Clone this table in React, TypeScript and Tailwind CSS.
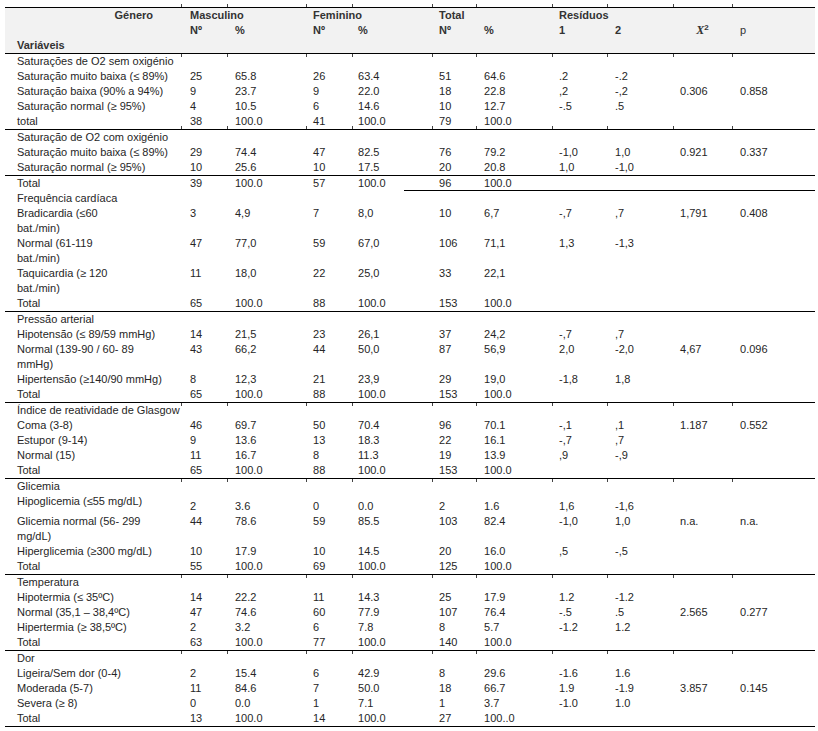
import React from "react";

type Row = {
  label?: React.ReactNode;
  v?: string;
  top?: "full";
  ticks?: "above" | "below";
  tall?: boolean;
  partialBottom?: boolean;
};

const colW = [
  "w-[176px]",
  "w-[46px]",
  "w-[79px]",
  "w-[46px]",
  "w-[80px]",
  "w-[44px]",
  "w-[76px]",
  "w-[55px]",
  "w-[66px]",
  "w-[59px]",
  "w-[83px]",
];

const padL = [
  "pl-[12px]",
  "pl-[9px]",
  "pl-[8px]",
  "pl-[7px]",
  "pl-[6px]",
  "pl-[7px]",
  "pl-[8px]",
  "pl-[7px]",
  "pl-[8px]",
  "pl-[7px]",
  "pl-[8px]",
];

const rows: Row[] = [
  { label: "Saturações de O2 sem oxigénio", top: "full", ticks: "below" },
  { label: "Saturação muito baixa (≤ 89%)", v: "25 65.8 26 63.4 51 64.6 .2 -.2" },
  { label: "Saturação baixa (90% a 94%)", v: "9 23.7 9 22.0 18 22.8 ,2 -,2 0.306 0.858" },
  { label: "Saturação normal (≥ 95%)", v: "4 10.5 6 14.6 10 12.7 -.5 .5" },
  { label: "total", v: "38 100.0 41 100.0 79 100.0" },

  { label: "Saturação de O2 com oxigénio", top: "full", ticks: "above" },
  { label: "Saturação muito baixa (≤ 89%)", v: "29 74.4 47 82.5 76 79.2 -1,0 1,0 0.921 0.337" },
  { label: "Saturação normal (≥ 95%)", v: "10 25.6 10 17.5 20 20.8 1,0 -1,0" },
  { label: "Total", v: "39 100.0 57 100.0 96 100.0", top: "full", partialBottom: true },

  { label: "Frequência cardíaca" },
  { label: <>Bradicardia (≤60<br />bat./min)</>, v: "3 4,9 7 8,0 10 6,7 -,7 ,7 1,791 0.408" },
  { label: <>Normal (61-119<br />bat./min)</>, v: "47 77,0 59 67,0 106 71,1 1,3 -1,3" },
  { label: <>Taquicardia (≥ 120<br />bat./min)</>, v: "11 18,0 22 25,0 33 22,1" },
  { label: "Total", v: "65 100.0 88 100.0 153 100.0" },

  { label: "Pressão arterial", top: "full" },
  { label: "Hipotensão (≤ 89/59 mmHg)", v: "14 21,5 23 26,1 37 24,2 -,7 ,7" },
  { label: <>Normal (139-90 / 60- 89<br />mmHg)</>, v: "43 66,2 44 50,0 87 56,9 2,0 -2,0 4,67 0.096" },
  { label: "Hipertensão (≥140/90 mmHg)", v: "8 12,3 21 23,9 29 19,0 -1,8 1,8" },
  { label: "Total", v: "65 100.0 88 100.0 153 100.0" },

  { label: "Índice de reatividade de Glasgow", top: "full", ticks: "below" },
  { label: "Coma (3-8)", v: "46 69.7 50 70.4 96 70.1 -,1 ,1 1.187 0.552" },
  { label: "Estupor (9-14)", v: "9 13.6 13 18.3 22 16.1 -,7 ,7" },
  { label: "Normal (15)", v: "11 16.7 8 11.3 19 13.9 ,9 -,9" },
  { label: "Total", v: "65 100.0 88 100.0 153 100.0" },

  { label: "Glicemia", top: "full", ticks: "below" },
  { label: "Hipoglicemia (≤55 mg/dL)", v: "2 3.6 0 0.0 2 1.6 1,6 -1,6", tall: true },
  { label: <>Glicemia normal (56- 299<br />mg/dL)</>, v: "44 78.6 59 85.5 103 82.4 -1,0 1,0 n.a. n.a." },
  { label: "Hiperglicemia (≥300 mg/dL)", v: "10 17.9 10 14.5 20 16.0 ,5 -,5" },
  { label: "Total", v: "55 100.0 69 100.0 125 100.0" },

  { label: "Temperatura", top: "full", ticks: "below" },
  { label: "Hipotermia (≤ 35ºC)", v: "14 22.2 11 14.3 25 17.9 1.2 -1.2" },
  { label: "Normal (35,1 – 38,4ºC)", v: "47 74.6 60 77.9 107 76.4 -.5 .5 2.565 0.277" },
  { label: "Hipertermia (≥ 38,5ºC)", v: "2 3.2 6 7.8 8 5.7 -1.2 1.2" },
  { label: "Total", v: "63 100.0 77 100.0 140 100.0" },

  { label: "Dor", top: "full", ticks: "below" },
  { label: "Ligeira/Sem dor (0-4)", v: "2 15.4 6 42.9 8 29.6 -1.6 1.6" },
  { label: "Moderada (5-7)", v: "11 84.6 7 50.0 18 66.7 1.9 -1.9 3.857 0.145" },
  { label: "Severa (≥ 8)", v: "0 0.0 1 7.1 1 3.7 -1.0 1.0" },
  { label: "Total", v: "13 100.0 14 100.0 27 100..0" },
];

// little border marks that Word leaves where the column edges meet a rule
const Tick = ({ side, left = "left-0" }: { side: "above" | "below"; left?: string }) => (
  <span
    className={`absolute ${left} w-px bg-[#444] ${
      side === "above" ? "top-[-4px] h-[3px]" : "top-0 h-[3px]"
    }`}
  />
);

export default function App() {
  return (
    <div className="min-h-screen bg-white pl-[5px] pt-[7px] font-['Liberation_Sans',Arial,sans-serif] text-[11px] text-[#262626]">
      <table className="w-[810px] table-fixed border-collapse border-b border-black">
        <colgroup>
          {colW.map((w, i) => (
            <col key={i} className={w} />
          ))}
        </colgroup>
        <thead className="bg-[#f2f2f2] font-bold text-[#333]">
          <tr className="h-[15px] leading-[15px]">
            <td className="border-t border-black pr-[28px] text-right">Género</td>
            <td colSpan={2} className={`relative border-t border-black ${padL[1]}`}>
              <Tick side="above" />
              Masculino
              <Tick side="above" left="left-[46px]" />
            </td>
            <td colSpan={2} className={`relative border-t border-black ${padL[3]}`}>
              <Tick side="above" />
              Feminino
              <Tick side="above" left="left-[46px]" />
            </td>
            <td colSpan={2} className={`relative border-t border-black ${padL[5]}`}>
              <Tick side="above" />
              Total
              <Tick side="above" left="left-[44px]" />
            </td>
            <td colSpan={2} className={`relative border-t border-black ${padL[7]}`}>
              <Tick side="above" />
              Resíduos
              <Tick side="above" left="left-[55px]" />
            </td>
            <td className="relative border-t border-black">
              <Tick side="above" />
            </td>
            <td className="relative border-t border-black">
              <Tick side="above" />
            </td>
          </tr>
          <tr className="h-[15px] leading-[15px]">
            <td />
            <td className={padL[1]}>Nº</td>
            <td className={padL[2]}>%</td>
            <td className={padL[3]}>Nº</td>
            <td className={padL[4]}>%</td>
            <td className={padL[5]}>Nº</td>
            <td className={padL[6]}>%</td>
            <td className={padL[7]}>1</td>
            <td className={padL[8]}>2</td>
            <td className="text-center">
              <span className="font-['Liberation_Serif',serif] text-[12px] font-bold italic">X</span>
              <sup className="text-[8px] font-bold">2</sup>
            </td>
            <td className={`${padL[10]} font-normal`}>p</td>
          </tr>
          <tr className="h-[15px] leading-[15px]">
            <td className={padL[0]}>Variáveis</td>
            <td colSpan={10} />
          </tr>
        </thead>
        <tbody>
          {rows.map((r, ri) => {
            const vals = r.v ? r.v.split(" ") : [];
            const border = r.top === "full" ? "border-t border-black" : "";
            return (
              <tr
                key={ri}
                className={r.tall ? "h-[20px] leading-[15px]" : "h-[15px] leading-[15px]"}
              >
                {colW.map((_, ci) => {
                  const partial =
                    r.partialBottom && ci >= 5 ? "shadow-[inset_0_-1px_0_#000]" : "";
                  const align = r.tall && ci > 0 ? "align-bottom" : "align-top";
                  return (
                    <td
                      key={ci}
                      className={`relative whitespace-nowrap p-0 ${padL[ci]} ${border} ${partial} ${align}`}
                    >
                      {r.ticks && ci > 0 ? <Tick side={r.ticks} /> : null}
                      {r.partialBottom && ci === 4 ? (
                        <span className="absolute bottom-0 left-[52px] right-0 h-px bg-black" />
                      ) : null}
                      {ci === 0 ? r.label : vals[ci - 1] ?? ""}
                    </td>
                  );
                })}
              </tr>
            );
          })}
        </tbody>
      </table>
    </div>
  );
}
